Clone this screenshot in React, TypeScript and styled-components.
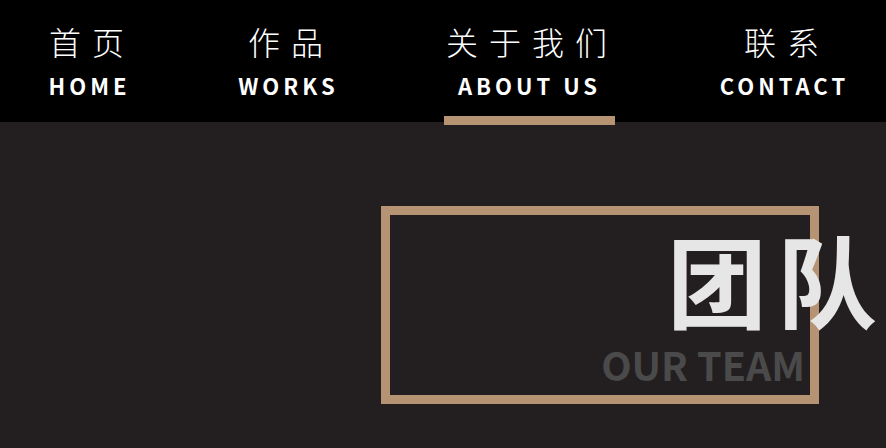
import React from 'react'
import styled, { createGlobalStyle } from 'styled-components'

const GlobalStyle = createGlobalStyle`
  html, body {
    margin: 0;
    padding: 0;
    background: #231f20;
  }
  body {
    font-family: "Noto Sans CJK SC", "Noto Sans", sans-serif;
  }
`

const Page = styled.div`
  width: 886px;
  height: 448px;
  overflow: hidden;
  background: #231f20;
`

const NavBar = styled.nav`
  height: 122px;
  background: #000;
  display: flex;
  align-items: stretch;
  padding-left: 4px;
  box-sizing: border-box;
`

const NavItem = styled.a<{ $active?: boolean; $gap: number }>`
  position: relative;
  width: 171px;
  display: flex;
  flex-direction: column;
  align-items: center;
  padding-top: 21px;
  margin-left: ${(p) => p.$gap}px;
  color: #fff;
  text-decoration: none;
  &::after {
    content: '';
    display: ${(p) => (p.$active ? 'block' : 'none')};
    position: absolute;
    left: 0;
    right: 0;
    bottom: -3px;
    height: 9px;
    background: #b69373;
  }
`

const NavCn = styled.span`
  font-size: 32px;
  font-weight: 300;
  letter-spacing: 11px;
  margin-right: -5px;
  line-height: 40px;
`

const NavEn = styled.span`
  font-size: 22px;
  font-weight: 700;
  letter-spacing: 4px;
  line-height: 30px;
  margin-top: 9px;
`

const Section = styled.section`
  padding: 84px 0 0 381px;
`

const Frame = styled.div`
  width: 438px;
  height: 198px;
  box-sizing: border-box;
  border: 9px solid #b69373;
  display: flex;
  flex-direction: column;
  align-items: flex-end;
  padding: 11px 5px 0 0;
`

const TitleCn = styled.h2`
  margin: 0 -82px 0 0;
  font-size: 100px;
  font-weight: 700;
  letter-spacing: 10px;
  line-height: 104px;
  color: #e6e6e6;
`

const TitleEn = styled.div`
  font-size: 39.5px;
  font-weight: 700;
  line-height: 44px;
  color: #4a4a4a;
  margin-top: 12px;
`

const items = [
  { cn: '首页', en: 'HOME', gap: 0 },
  { cn: '作品', en: 'WORKS', gap: 28 },
  { cn: '关于我们', en: 'ABOUT US', gap: 70, active: true },
  { cn: '联系', en: 'CONTACT', gap: 84 },
]

export default function App() {
  return (
    <Page>
      <GlobalStyle />
      <NavBar>
        {items.map((it) => (
          <NavItem key={it.en} href="#" $gap={it.gap} $active={it.active}>
            <NavCn>{it.cn}</NavCn>
            <NavEn>{it.en}</NavEn>
          </NavItem>
        ))}
      </NavBar>
      <Section>
        <Frame>
          <TitleCn>团队</TitleCn>
          <TitleEn>OUR TEAM</TitleEn>
        </Frame>
      </Section>
    </Page>
  )
}
